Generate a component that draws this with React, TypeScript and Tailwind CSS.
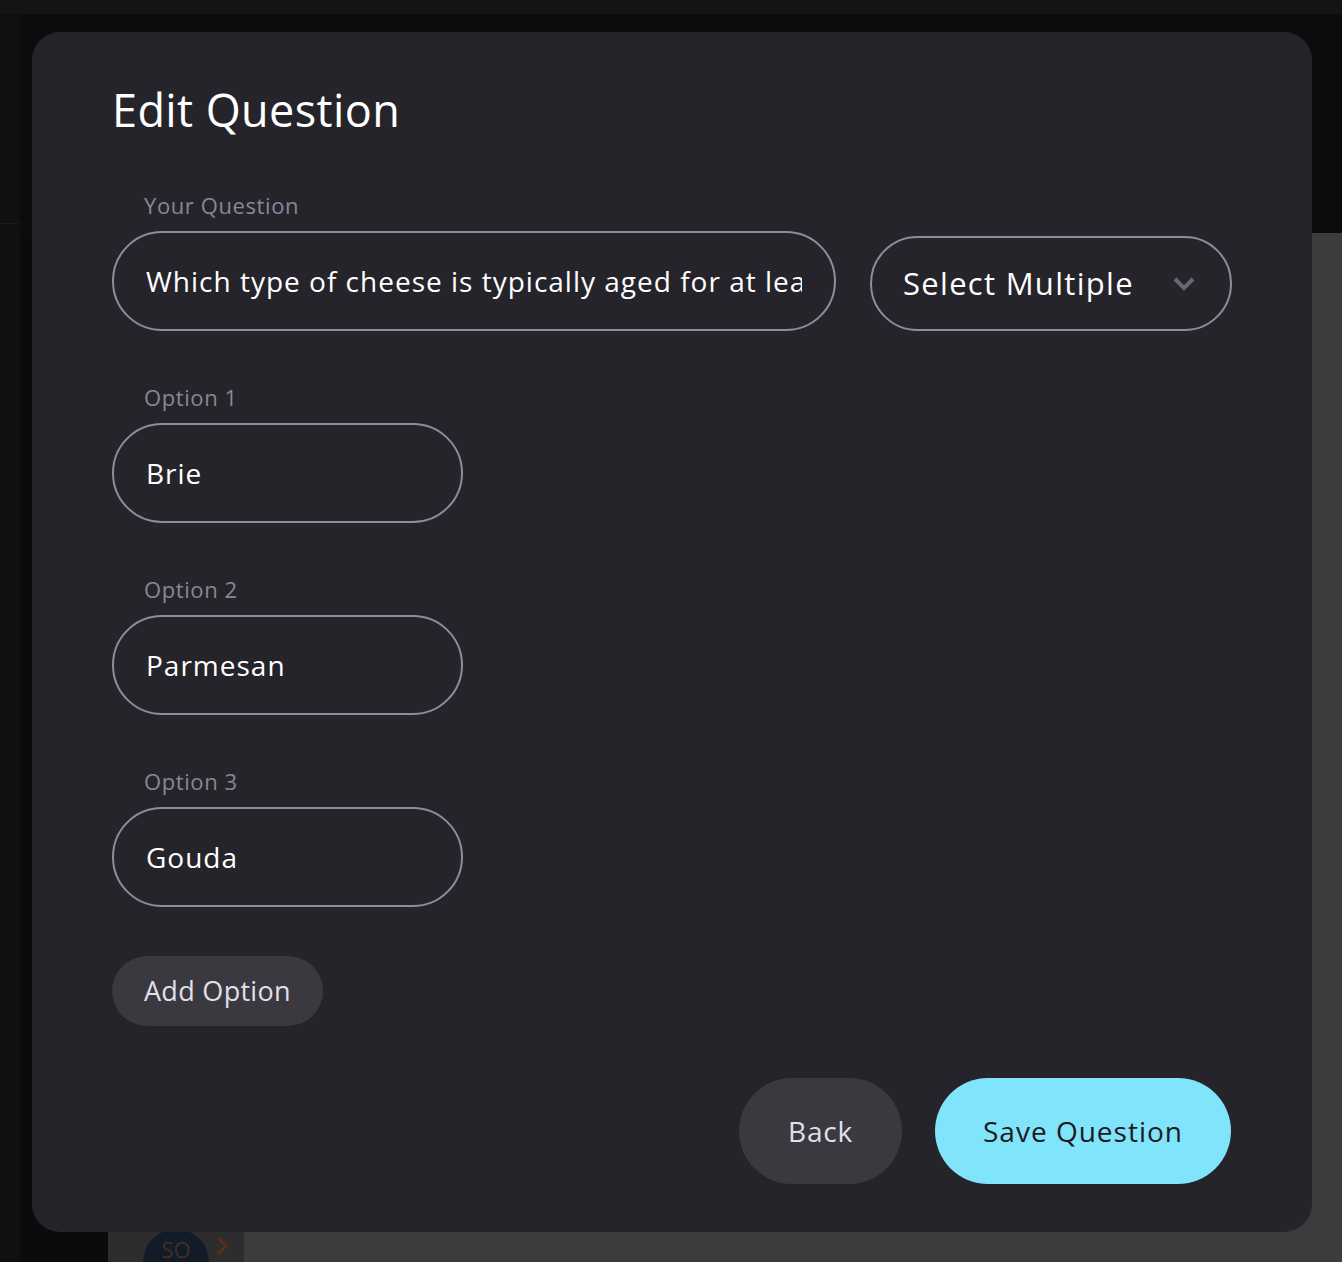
import React from "react";

const font = { fontFamily: '"Open Sans", "Noto Sans", sans-serif' };

function Field({ label, value, width }: { label: string; value: string; width: string }) {
  return (
    <div className="flex flex-col">
      <label className="pl-[32px] text-[22px] leading-[30px] font-medium tracking-[0.6px] text-[#8a8696]">{label}</label>
      <input
        readOnly
        value={value}
        className={`mt-[11px] h-[100px] ${width} rounded-full border-2 border-[#8f8b9a] bg-transparent px-[32px] text-[28px] tracking-[1px] text-white outline-none`}
      />
    </div>
  );
}

export default function App() {
  return (
    <div className="relative h-[1262px] w-full overflow-hidden bg-[#0b0b0d]" style={font}>
      {/* dimmed page behind the dialog */}
      <div className="flex h-full flex-col">
        <div className="h-[14px] bg-[#141416]" />
        <div className="flex flex-1">
          <div className="flex w-[20px] flex-col bg-[#101012]">
            <div className="h-[210px] border-b border-[#19191b]" />
          </div>
          <div className="flex flex-1 flex-col">
            <div className="h-[219px] bg-[#0c0c0e]" />
            <div className="flex flex-1">
              <div className="w-[88px] bg-[#0b0b0c]" />
              <div className="flex flex-1 flex-col justify-end bg-[#3c3c3c]">
                <div className="flex h-[30px] w-[136px] items-start bg-[#2d2d2d]">
                  <div className="ml-[35px] -mt-[3px] flex h-[66px] w-[66px] items-start justify-center rounded-full bg-[#121c28] pt-[4px] text-[22px] text-[#4a2c1e]">
                    SO
                  </div>
                  <svg className="ml-[5px] mt-[3px]" width="16" height="22" viewBox="0 0 16 22" fill="none">
                    <path d="M4 3l8 8-8 8" stroke="#5a2e18" strokeWidth="3" />
                  </svg>
                </div>
              </div>
            </div>
          </div>
        </div>
      </div>

      {/* dialog */}
      <div className="absolute left-[32px] top-[32px] flex h-[1200px] w-[1280px] flex-col rounded-[28px] bg-[#26242b] px-[80px] pt-[50px]">
        <h1 className="text-[45px] leading-[56px] font-normal tracking-[0.4px] text-white">Edit Question</h1>

        <div className="mt-[52px] flex items-end gap-[34px]">
          <Field label="Your Question" value="Which type of cheese is typically aged for at least 12 months?" width="w-[724px]" />
          <div className="flex h-[95px] w-[362px] items-center justify-between rounded-full border-2 border-[#8f8b9a] pl-[31px] pr-[34px]">
            <span className="text-[31px] tracking-[1.3px] text-white">Select Multiple</span>
            <svg width="24" height="16" viewBox="0 0 24 16" fill="none">
              <path d="M3 3l9 9 9-9" stroke="#6a6678" strokeWidth="4" />
            </svg>
          </div>
        </div>

        <div className="mt-[51px] flex flex-col gap-[51px]">
          <Field label="Option 1" value="Brie" width="w-[351px]" />
          <Field label="Option 2" value="Parmesan" width="w-[351px]" />
          <Field label="Option 3" value="Gouda" width="w-[351px]" />
        </div>

        <div className="mt-[49px]">
          <button className="h-[70px] rounded-full bg-[#3a3940] px-[32px] text-[27px] tracking-[0.3px] text-[#e2dfe8]">Add Option</button>
        </div>

        <div className="mt-[52px] flex justify-end gap-[33px] pr-[1px]">
          <button className="h-[106px] w-[163px] rounded-full bg-[#3a3940] text-[28px] tracking-[0.8px] text-[#e2dfe8]">Back</button>
          <button className="h-[106px] w-[296px] rounded-full bg-[#80e4fb] text-[28px] tracking-[1px] text-[#1b1a20]">Save Question</button>
        </div>
      </div>
    </div>
  );
}
